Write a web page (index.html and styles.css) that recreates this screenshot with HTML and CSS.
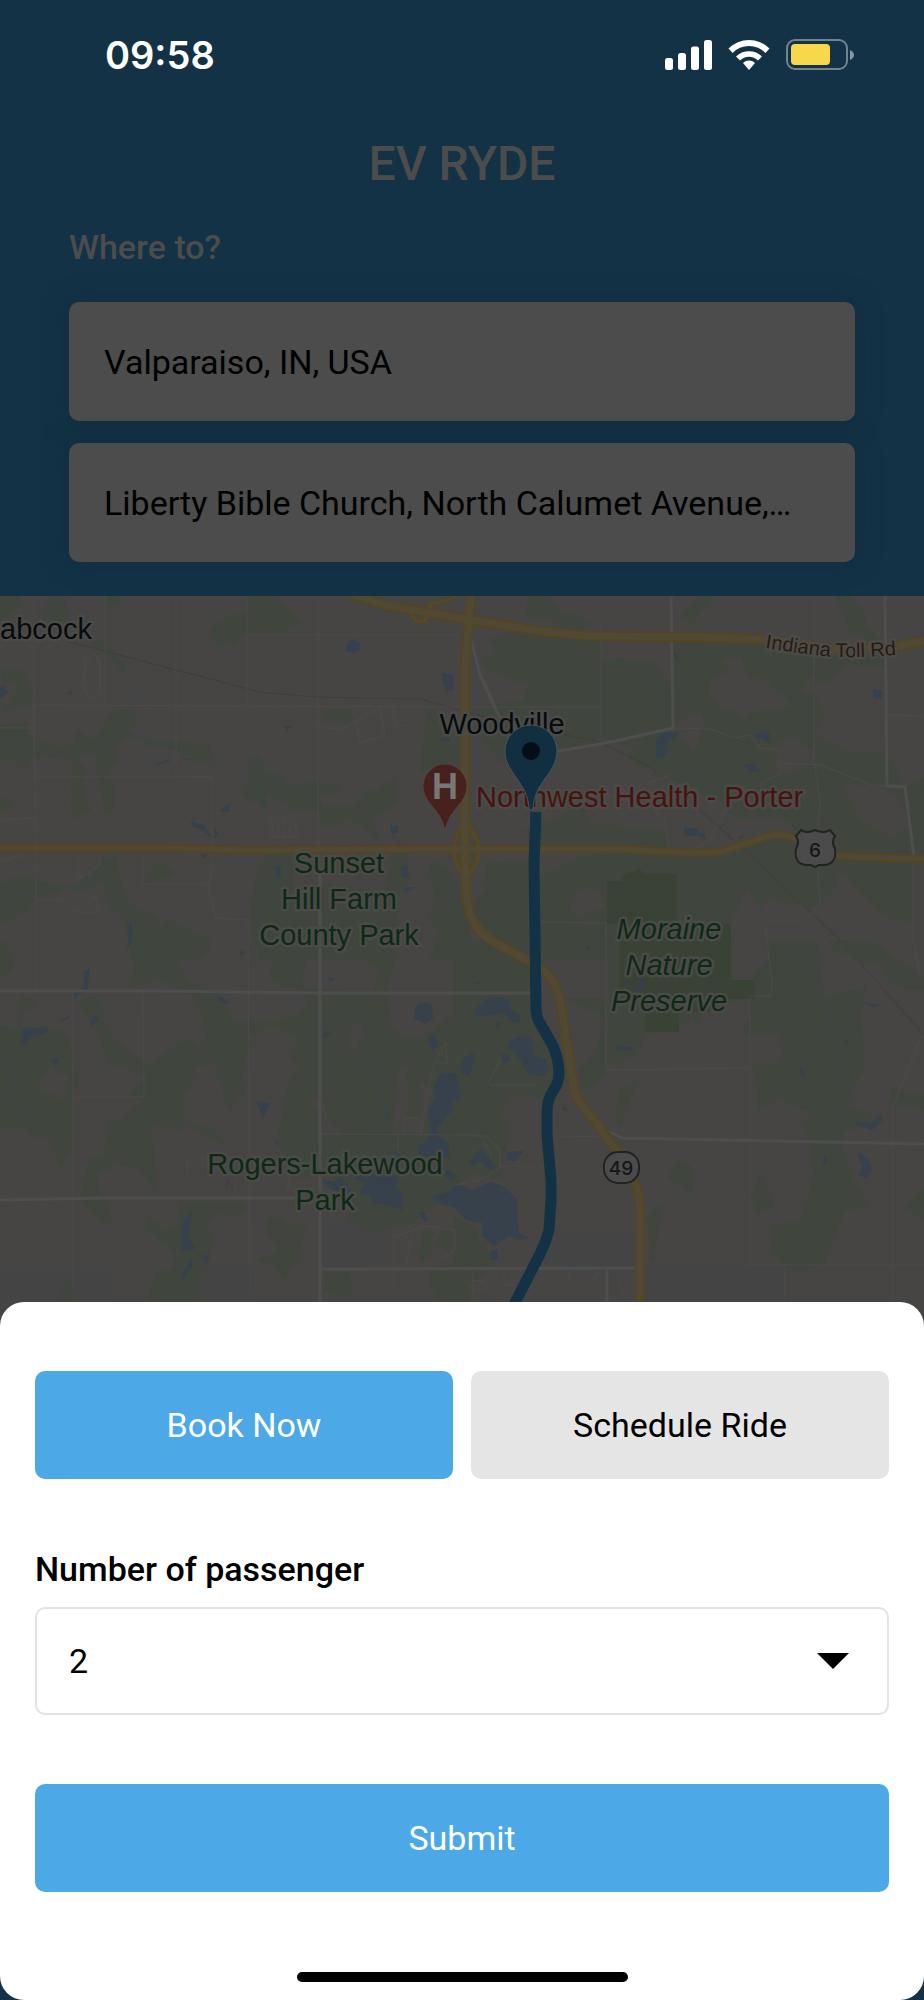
FILE: index.html
```html
<!DOCTYPE html>
<html lang="en">
<head>
<meta charset="utf-8">
<meta name="viewport" content="width=device-width, initial-scale=1">
<title>EV RYDE</title>
<link rel="stylesheet" href="styles.css">
</head>
<body>
<div class="screen">
  <header class="top">
    <div class="status">
      <time class="clock">09:58</time>
      <svg class="status-icons" viewBox="0 0 192 36" aria-hidden="true">
        <g fill="#fff">
          <rect x="2" y="21" width="8" height="12" rx="2.5"/><rect x="15" y="16" width="8" height="17" rx="2.5"/><rect x="28" y="9.500" width="8" height="23.500" rx="2.500"/><rect x="41" y="3" width="8" height="30" rx="2.500"/>
          <path d="M65.500 11.500 A29 29 0 0 1 106.500 11.500 L102.500 16 A23 23 0 0 0 69.500 16Z"/>
          <path d="M73 19.500 A18.500 18.500 0 0 1 99 19.500 L95 23.500 A12.500 12.500 0 0 0 77 23.500Z"/>
          <path d="M80 26 A8.500 8.500 0 0 1 92 26 L86 33Z"/>
        </g>
        <rect x="124" y="3" width="60" height="29" rx="8" fill="none" stroke="#718490" stroke-width="2"/>
        <rect x="128" y="7" width="39" height="21" rx="4" fill="#f8d84a"/>
        <path d="M187 13 Q191 15 191 18 Q191 21 187 23Z" fill="#8a98a1"/>
      </svg>
    </div>
    <h1 class="title">EV RYDE</h1>
    <form class="route">
      <h2 class="route-label">Where to?</h2>
      <input class="place" type="text" aria-label="Pick-up" value="Valparaiso, IN, USA">
      <input class="place" type="text" aria-label="Destination" value="Liberty Bible Church, North Calumet Avenue,…">
    </form>
  </header>

  <svg class="map" viewBox="0 596 924 740" preserveAspectRatio="xMidYMin slice" role="img" aria-label="Route map">
    <rect y="596" width="924" height="740" class="land"/>
    <path fill="#444444" d="M324 1222H390V1268H324ZM0 1270H110V1336H0ZM200 1265H250V1336H200ZM545 1232H635V1268H545ZM640 1266H790V1336H640Z"/>

    <g class="green" transform="translate(0 590) scale(.33333)">
      <path d="M0 18H65L50 60 0 95ZM150 18H195L205 85 165 115 125 85ZM315 18H362V45L330 55 315 40ZM742 18H820L860 45 903 103 850 128 742 125 700 165 655 170 630 122 665 80 742 70Z"/>
      <path d="M262 152 315 148 380 235 372 252 330 200ZM5 238 62 230 98 300 90 345 12 366 30 330 50 300 40 280 5 275ZM0 405 80 398 82 430 130 450 175 470 225 460 222 435 242 422 262 450 300 430 330 375 370 358 410 370V405L385 425 460 450 630 465 634 515 600 520 530 480 440 465 380 435 345 470 350 520 318 545 345 600 345 655 330 678 310 665 308 600 288 560 292 490 230 510 252 530V620L275 660 215 690V510L130 500 85 510 65 543 40 510 0 512Z"/>
      <path d="M0 618 25 620 35 650 0 668ZM750 492 782 505 795 535 855 565 862 585 945 575 1020 588 1010 615 965 618 967 650 1020 640 1065 650 1095 600 1130 605 1185 562 1188 635 1165 660 1110 685 1138 745 1132 760 1090 705 1040 690 1000 712 962 705V670L885 665 845 640 800 605V660L770 640 725 615 745 575ZM975 360 1050 355 1060 390 1040 400 975 395ZM1280 362 1325 370V440L1382 420V530L1360 545 1300 530 1262 545Z"/>
      <path d="M445 845 480 815 520 845V855L442 880ZM0 880 80 850 110 875 185 880V910L110 920 80 970 0 1000ZM350 795 365 900 380 930 410 950 470 975 480 1015 520 988 630 1050V1080L600 1110H395L375 990 330 950 300 880 240 905 200 895 290 840 315 805ZM805 790 860 790 880 810 880 890 925 885 980 880 1090 900 1160 905 1170 800 1190 740 1220 790 1230 870 1190 930 1195 1040 1150 1110H780L760 1050 750 960 770 850ZM1300 800 1350 840 1380 900 1410 1000V1110H1290L1320 1030 1280 980 1310 930 1285 850Z"/>
    </g>
    <g class="green" transform="translate(454 590) scale(.33333)">
      <path d="M220 18H280L320 60 380 80 415 105 405 120 330 115 290 90 218 85ZM735 18H775L760 50 710 105 672 85ZM1140 18H1190L1230 70 1240 110 1290 150 1270 165 1190 130 1170 70Z"/>
      <path d="M95 145 160 125 330 130 440 150V220L480 205 600 210 640 270 655 300V150H700L940 165 1140 200 1290 180V235L1180 220 1130 270 1085 290 1080 240 1020 345 960 300 945 270 880 260 860 200 800 210 830 245 770 270 765 315 810 355 845 350 870 390 930 350H1000L1040 310H1080L1110 370 1080 430 1190 490H1300L1355 590 1375 790 1375 1000 1290 980 1190 880 1150 850V1110H930L960 1000 880 890 830 1000V1110H260V860L370 800 540 790 440 780 270 775 200 720 290 690 390 640 400 700 640 720 640 780 800 780 950 740 1020 750V700L900 680 860 700 800 640 720 600 640 560 520 510 540 480 450 440 350 475 310 480 200 510 140 520 60 400 80 350 210 330 220 290 100 240 90 210 130 190Z"/>
      <path d="M1355 590 1410 560V790L1375 790ZM0 1000 90 900 100 820 222 810V1090L90 1030 40 950Z"/>
    </g>
    <g class="land" transform="translate(454 590) scale(.33333)">
      <path d="M400 890 440 910 450 950 370 980 345 960 360 915ZM680 390 740 370 750 410 720 490 670 420ZM880 1020 940 930 1090 950 1180 860 1290 980 1375 1000V1110H930ZM960 470 1000 440 1060 470 1090 490 1080 520 970 560ZM1160 580 1280 590 1330 620 1375 710 1310 740 1220 690Z"/>
    </g>
    <g class="green" transform="translate(0 940) scale(.33333)">
      <path d="M0 0 15 5 45 75 12 112 0 105ZM415 0H630V25L580 25 530 40 530 70 570 125 650 155 705 245 800 240 880 230 925 200 905 155 885 140 860 145 815 120 810 80 840 35 920 35 905 140 980 150 1085 155 1160 165 1175 200 1160 240 1200 290 1270 285 1360 225 1410 180V700L1330 780 1220 860 1100 875 1040 830 1060 770 980 700 960 700 895 720 830 600 850 510 865 420 905 385 875 350 890 300 820 260 750 290 740 350 725 400 740 475 710 460 695 510 670 490 670 430 640 400 660 365 590 385 580 430 550 460 555 545 600 550 640 565 680 620 620 590 560 545 540 570 450 555 460 620 470 760 435 710 400 680 350 675 295 700 290 740 325 795 340 860 270 815 240 770 270 660 310 640 330 545 365 540 430 480 380 470 440 410 325 370 290 260 240 205 240 185 280 165 310 190 310 240 345 300 450 380 545 300 580 300 590 320 620 295 610 240 580 170 480 120 395 140Z"/>
      <path d="M65 165 105 190 105 200 75 210 65 230 75 260 180 260 210 300 215 360 245 410 220 460 215 640 180 685 165 630 135 590 100 595 70 565 0 565V260H55V220H60ZM540 785H730L740 805 720 830 655 820 620 860 640 895 620 985 600 1000 600 1100H440L465 1000 520 980 525 935 480 910 440 865 445 830 500 865 535 850ZM800 835 845 830 870 850 920 860 905 900 900 950 850 1025 830 985 770 960 810 950 835 920 800 880ZM980 1000 1050 995 1058 1065 990 1065 972 1045ZM190 1020 220 1015V1085H180ZM1290 980 1390 965 1410 1085H1320L1290 1040ZM1090 0H1200L1160 150H1120L1140 95 1095 65ZM1320 0H1410V70L1290 55ZM1270 870 1300 875 1290 960 1260 960ZM1330 860 1365 890 1345 940 1305 915Z"/>
    </g>
    <g class="land" transform="translate(0 940) scale(.33333)">
      <path d="M110 440 150 385 205 410V470L175 475ZM970 520 925 485 965 460 985 540 1035 585H970ZM1195 385 1220 380 1225 500 1200 585H1175ZM1045 275 1080 240 1090 280 1065 335 1045 325ZM1260 430 1300 440 1270 580H1215V530L1260 525Z"/>
    </g>
    <g class="green" transform="translate(454 940) scale(.33333)">
      <path d="M0 0H100L228 70V160H0ZM285 0H460V10L410 40 285 30ZM330 175H445L460 210V400L420 440 375 445 375 385 430 340 445 230ZM0 160H228L245 240 300 320 310 440 250 475 240 465H165L135 530 160 555V600L140 700 150 720 60 700 0 700ZM465 0H840V120H905V175H860L820 200 740 220 730 265 715 230 660 275 570 280 560 340 500 375 465 370ZM550 425 500 555 485 550 495 450 520 430ZM890 175 900 100 950 60 930 0H1090L1110 170 1200 150 1240 130 1220 230 1230 320 1230 400 1200 430 1195 500 1250 520 1280 525 1170 580 1160 620 1200 720 1250 795 1170 820 1110 970 1040 995 990 980 950 940 955 860 1040 840 1080 700 1070 600 1050 555 1075 510 1030 510 980 475 915 515 910 440 895 370 980 370 990 320 970 285 875 290 870 250 890 240ZM1120 0H1250L1410 110V150L1340 150 1300 120 1290 80 1200 60 1140 30ZM1310 445 1410 460V510L1310 495ZM920 705 965 800 910 820 890 770ZM680 660 710 675 718 765 640 710ZM620 790 600 965 590 960 580 820ZM1410 740V840L1355 805ZM0 830 60 860 80 910 120 950V980L0 1070Z"/>
    </g>
    <path class="reserve" d="M607 881H622L624 874 640 869 643 874H677V924H731V980H755V999H727V1011L679 1013V1032H645V999H619V924H607Z"/>

    <g class="water" transform="translate(0 590) scale(.33333)">
      <path d="M1038 165 1058 147 1082 158 1080 178 1060 190 1038 182ZM1328 248 1360 255 1358 303 1338 303 1328 275ZM0 290 15 288 25 310 0 325ZM466 523 510 508 508 514 466 528ZM660 660 693 637 685 665 665 665ZM572 695 612 705 640 748 605 718 575 708ZM645 715 655 735 642 748ZM828 828H843V862H828ZM600 790 625 795 610 805ZM1205 830 1223 823 1225 865 1204 860ZM1213 890 1248 892 1225 905H1213ZM385 1000 396 998 395 1055 380 1080 388 1045ZM1168 700 1182 710 1195 705 1192 728 1175 732ZM855 408H875L860 422ZM1318 443H1350V453H1318ZM200 312 217 300 213 313ZM552 503 578 508 560 513ZM715 1082 735 1085 722 1097Z"/>
    </g>
    <g class="water" transform="translate(454 590) scale(.33333)">
      <path d="M605 450 625 430 675 425 668 440 640 460 640 485 625 508 607 500ZM900 435 945 425 948 458 925 448ZM870 525 900 520 918 545 885 545ZM690 712 730 715 735 728 752 730 755 750 735 738 690 735ZM1258 300H1285V325H1258ZM660 190 675 200 665 208ZM850 740 875 735 860 748ZM1010 700 1028 712 1020 722ZM398 1060 410 1082 398 1080Z"/>
    </g>
    <g class="water" transform="translate(0 940) scale(.33333)">
      <path d="M252 95 270 85 262 145 235 165 220 178V160L250 145ZM65 268 145 262 140 278 90 292 75 310 63 310ZM172 248 207 225 205 238ZM285 225 298 238 282 250 278 268 270 245ZM152 357H178L166 378ZM655 167 692 188 680 192 655 180ZM768 483 812 492 788 535ZM820 598 838 605 832 620ZM545 855 570 815 575 835 565 890 582 915 580 932H545ZM572 948 580 975 550 1020 545 1000 562 980ZM615 940 628 955 620 972 610 960ZM985 110 1008 118 987 128ZM970 280 998 275 972 295ZM1243 205 1265 185 1295 193 1300 235 1275 252 1245 238ZM1300 282 1320 318 1295 327 1283 300ZM1327 398 1370 400 1375 440 1382 465 1355 490 1362 505 1335 535 1310 565 1315 585 1347 610 1348 655 1300 655 1258 645 1255 620 1290 590 1287 510 1305 470 1302 435ZM1155 510 1170 525 1160 540ZM970 720 1005 725 1020 710 1055 750 1050 765 980 745ZM1050 705 1195 705 1185 740 1208 760 1208 812 1165 795 1115 790 1110 765 1078 760 1095 730ZM1290 770 1345 755 1370 732 1410 745V845L1380 805 1325 795ZM1340 685 1370 710 1355 722 1335 710ZM1255 818 1270 815 1285 840 1275 845ZM1410 342 1382 380 1395 400 1410 408ZM680 720 688 725 677 745ZM1170 632 1200 640 1195 655Z"/>
    </g>
    <g class="water" transform="translate(454 940) scale(.33333)">
      <path d="M63 210 100 175 140 170 170 185 165 205 202 230 195 250 175 245 150 220 65 230ZM160 320 170 300 205 285 235 300 238 345 278 360 282 385 270 410 220 402 200 360ZM20 375 35 350 62 338 60 365 45 407 22 400ZM0 405 12 430 20 468 0 482ZM140 345 160 342 172 360 150 370ZM0 735 55 750 110 725 150 738 190 780V850L195 880 225 895 195 900 165 888 120 920 82 885 88 850 35 840 0 800ZM45 670 82 620 100 650 125 680 110 692 80 665 60 675ZM160 635 212 632 180 665 158 655ZM112 930 130 928 133 960 112 960ZM487 317 530 320 542 337 490 328ZM1035 365 1045 390 1060 415 1040 405ZM1205 545 1250 550 1283 520 1285 540 1255 570 1210 555ZM1213 637 1240 655 1255 690 1235 715 1215 705 1225 680 1215 660ZM1113 640 1122 665 1105 683ZM1225 185 1285 195 1255 203ZM325 490 342 512 328 510ZM510 125 530 120 510 140ZM535 155 565 120 578 115 565 145 550 160ZM60 125 88 128 70 132ZM120 250 140 245 135 265ZM1170 300 1180 302 1175 315ZM755 942 770 955 757 948Z"/>
    </g>

    <g class="stream">
      <path d="M50 596 49 628 100 632 110 650 125 670 135 703 122 731 92 755 70 760 35 747 0 741M123 731 150 738 180 748 205 765 248 757 262 773 283 780 285 786 313 783 325 775 361 750 385 750 392 754 410 751 418 768M153 740 150 755 145 770M135 703 156 680 147 665 150 645 162 632 209 605 216 610 218 645 225 662 250 670 278 670M248 757 250 780 262 795 262 825 270 845 290 850 292 865 262 900 257 930M0 897 30 893 55 884 85 886 102 872 120 895 137 910 137 930 140 957 180 986 215 996"/>
      <path d="M290 950 302 970 296 985 298 1005 315 1012 323 1030M323 1030 345 1020 360 1020 365 1040 362 1055 378 1080 385 1110 388 1115 380 1140 395 1155M0 1061 15 1070 12 1095 25 1120M0 1027 18 1028"/>
      <path d="M602 640 610 662 650 668 666 698 666 720M545 596 570 620 590 624M658 757 690 780 715 790 740 788M700 829 712 823 735 830 755 833 760 815M765 850 765 865 755 890 765 925 790 950 815 970 830 1020 840 1075 858 1085 850 1105 825 1130 845 1165 820 1175 818 1190M790 945 860 990 862 1003M548 1248 568 1265 595 1263 615 1270 618 1300M730 970 765 967"/>
    </g>

    <path class="rail" d="M70 642 260 692 315 697 420 699 500 721 600 742 650 767 700 810 750 855 840 940 924 1035"/>
    <g class="lane">
      <path d="M34 596V705L36 850 36 990M105 596V705M176 596V776L212 777V870L208 887 216 918 248 920 250 1290M247 596V706M247 635H460M318 596V850M34 705 460 707H600M0 728H34M35 777H212M143 850V884H208M0 820 34 818M318 726 340 730 362 718 380 708 385 735 360 743 355 720M393 708 395 725 407 725M78 850V879L100 866 99 856M0 862 20 855 35 872M36 900H62L75 912 95 895 99 913H80M270 825V818H293L298 835V837H272V820M278 818V836M284 818V836M290 818V836M84 655V690M100 655V697M85 685V670Q92 640 100 665V690Q92 707 85 690"/>
      <path d="M73 990V1290M143 990 144 1097 73 1097M321 1134 480 1135 492 1155M398 1134V1150M421 1134 423 1118 432 1070 446 1042 447 1063H437M404 1135V1118H422M187 1178V1160H210M235 1180V1200M290 1175 287 1195M394 1290V1237L425 1226 455 1230 455 1250 437 1260M412 1234 405 1268"/>
      <path d="M601 622V736M601 800 670 775M675 728 710 729 735 738 750 735 760 748 780 750V773L730 800 710 840 695 849M780 763 820 765 872 785 887 786M814 596V760L820 800 817 850 820 905 800 922H765V927L772 980 771 996H750V1140M887 715 924 716M606 922V1070L750 1068M540 922 606 923V940M668 815 660 800 654 810 665 820 668 850M554 1136 610 1137M924 1035 920 1040 893 1106V1336M750 1140V1265H924M785 1268V1300M913 860V940L920 977M469 1136 486 1136 500 1150V1168L480 1180 454 1185M500 1166H545M487 1085 500 1060M490 1085H535M473 1270V1300M473 1280 486 1282V1290H473M504 1270V1285H514M568 1270 570 1280H594L600 1270"/>
    </g>
    <g class="street">
      <path d="M671 596 673 728 620 740 595 745 558 751M471 640 475 655 480 675 500 718M885 596 887 786 905 787 914 857M0 991 160 991 320 993 530 993M320 870V1336M0 1200 105 1198 296 1198M322 1269 636 1268M607 1270V1336M602 1134 610 1132 622 1138 924 1144"/>
    </g>

    <g class="hw-edge" fill="none">
      <path d="M350 594 385 605 470 620 540 631 590 636 700 637 770 640 830 648 890 648 924 641"/>
      <path d="M471 596 469 622 465 665 465 850 466 890Q467 925 490 940L534 964Q556 977 560 1000L575 1095 590 1115 620 1155Q639 1180 640 1210V1336"/>
      <path class="hw-narrow" d="M0 848H150L250 850 420 849 620 849 690 853 720 852 765 837Q785 830 805 844L830 856 924 859"/>
      <path class="ramp" d="M410 613C417 627 430 624 430 604M430 605 460 596M465 820Q455 833 454 850Q455 865 466 878M465 820Q478 835 479 850Q478 865 466 878"/>
    </g>
    <g class="hw-fill" fill="none">
      <path d="M350 594 385 605 470 620 540 631 590 636 700 637 770 640 830 648 890 648 924 641"/>
      <path d="M471 596 469 622 465 665 465 850 466 890Q467 925 490 940L534 964Q556 977 560 1000L575 1095 590 1115 620 1155Q639 1180 640 1210V1336"/>
      <path class="hw-narrow" d="M0 848H150L250 850 420 849 620 849 690 853 720 852 765 837Q785 830 805 844L830 856 924 859"/>
      <path class="ramp" d="M410 613C417 627 430 624 430 604M430 605 460 596M465 820Q455 833 454 850Q455 865 466 878M465 820Q478 835 479 850Q478 865 466 878"/>
    </g>

    <g class="label">
      <text class="town" x="0" y="639">abcock</text>
      <text class="town" x="502" y="734" text-anchor="middle">Woodville</text>
      <text class="hospital" x="476" y="807">Northwest Health - Porter</text>
      <g class="park" text-anchor="middle">
        <text x="339" y="873">Sunset</text><text x="339" y="909">Hill Farm</text><text x="339" y="945">County Park</text>
        <text x="325" y="1174">Rogers-Lakewood</text><text x="325" y="1210">Park</text>
        <g font-style="italic"><text x="669" y="939">Moraine</text><text x="669" y="975">Nature</text><text x="669" y="1011">Preserve</text></g>
      </g>
      <path id="toll-name" fill="none" stroke="none" d="M765 648Q802 654 835 657Q870 658 915 653"/>
      <text class="road-name"><textPath href="#toll-name">Indiana Toll Rd</textPath></text>
    </g>

    <path d="M445 827Q443 817 433 806Q424 796 424 786A21 21 0 0 1 466 786Q466 796 457 806Q447 817 445 827Z" fill="#47211e" stroke="#551a17"/>
    <text class="h-mark" x="445" y="799" text-anchor="middle">H</text>

    <path d="M801 830Q807 834 815 830Q824 834 830 830L835 836Q831 842 835 849Q837 864 824 865H819L815 867 811 865H806Q794 864 796 849Q800 842 796 836Z" class="shield"/>
    <text class="shield-text" x="815" y="857" text-anchor="middle">6</text>
    <rect x="604" y="1152" width="35" height="31" rx="14" class="shield"/>
    <text class="shield-text" x="621" y="1175" text-anchor="middle">49</text>

    <path d="M536 812 534 865 536 1008Q536 1018 541 1025L553 1046Q559 1060 559 1073Q559 1083 553 1091Q547 1100 547 1112V1135L551 1180V1200L549 1230Q546 1242 540 1254L502 1328" fill="none" stroke="#133246" stroke-width="11"/>
    <path d="M529 809C528 782 505 773 505 751A26 26 0 0 1 557 751C557 773 534 782 533 809Q531 811 529 809Z" fill="#112f40" stroke="#47545b"/>
    <circle cx="531" cy="751" r="9" fill="#020f16"/>
  </svg>

  <main class="sheet">
    <div class="modes">
      <button class="btn btn-primary" type="button">Book Now</button>
      <button class="btn btn-muted" type="button">Schedule Ride</button>
    </div>
    <div class="field">
      <label class="field-label" for="passengers">Number of passenger</label>
      <div class="select-box">
        <select class="select" id="passengers"><option>1</option><option selected>2</option><option>3</option><option>4</option></select>
        <svg class="caret" viewBox="0 0 32 16" aria-hidden="true"><path d="M0 0H32L16 16Z"/></svg>
      </div>
    </div>
    <button class="btn btn-primary" type="submit">Submit</button>
    <div class="home-bar"></div>
  </main>
</div>
</body>
</html>
```
FILE: styles.css
```css
* { box-sizing: border-box; }

body {
  margin: 0;
  background: #133246;
  font-family: Roboto, "Liberation Sans", sans-serif;
  color: #000;
}

.screen {
  min-height: 100vh;
  display: flex;
  flex-direction: column;
}

/* Header */
.top { padding: 32px 69px 34px; }

.status {
  display: flex;
  align-items: center;
  justify-content: space-between;
  height: 46px;
  padding-left: 36px;
}

.clock {
  font: 600 38px/46px Inter, sans-serif;
  color: #fff;
}

.status-icons { width: 192px; height: 36px; }

.title {
  margin: 58px 0 0;
  font-size: 48px;
  font-weight: 500;
  line-height: 56px;
  text-align: center;
  color: #4c4c4c;
}

.route {
  display: flex;
  flex-direction: column;
  margin-top: 35px;
}

.route-label {
  margin: 0 0 35px;
  font-size: 34px;
  font-weight: 500;
  line-height: 40px;
  color: #4c4c4c;
}

.place {
  width: 100%;
  height: 119px;
  padding: 0 35px;
  border: 0;
  border-radius: 10px;
  background: #4c4c4c;
  box-shadow: 0 0 24px rgba(20, 45, 60, .8);
  font: 400 34px/40px Roboto, sans-serif;
  color: #000;
  text-overflow: ellipsis;
}

.place + .place { margin-top: 22px; }

/* Map */
.map {
  display: block;
  width: 100%;
  height: 740px;
  margin-bottom: -34px;
}

.land { fill: #464543; }
.green { fill: #40463e; }
.reserve { fill: #3a4236; }
.water { fill: #37414b; }
.stream { fill: none; stroke: #3d464d; stroke-width: 1; }
.rail { fill: none; stroke: #3f3e3c; stroke-width: 1; }
.lane { fill: none; stroke: #4b4b4a; stroke-width: 1; }
.street { fill: none; stroke: #4e4e4e; stroke-width: 3; }
.hw-edge { stroke: #55451f; stroke-width: 10; }
.hw-fill { stroke: #514933; stroke-width: 7; }
.hw-edge .hw-narrow { stroke-width: 8; }
.hw-fill .hw-narrow { stroke-width: 5; }
.hw-edge .ramp { stroke-width: 5; }
.hw-fill .ramp { stroke-width: 2; }

.label {
  font: 400 29px "Liberation Sans", sans-serif;
  stroke: #4a4a49;
  stroke-width: 5;
  stroke-linejoin: round;
  paint-order: stroke;
}

.town { fill: #080a0c; }
.park { fill: #0f2915; }
.hospital { fill: #48130f; }
.road-name { font-size: 20px; fill: #2a1a0b; }
.h-mark { font: 700 36px "Liberation Sans", sans-serif; fill: #777; }
.shield { fill: #4b4b4b; stroke: #222; stroke-width: 2; }
.shield-text { font: 500 19px Inter, sans-serif; fill: #161616; }

/* Booking sheet */
.sheet {
  position: relative;
  flex: 1;
  display: flex;
  flex-direction: column;
  padding: 69px 35px 18px;
  border-radius: 24px;
  background: #fff;
}

.modes {
  display: grid;
  grid-template-columns: 1fr 1fr;
  gap: 18px;
}

.btn {
  width: 100%;
  height: 108px;
  border: 0;
  border-radius: 10px;
  font: 400 34px/40px Roboto, sans-serif;
}

.btn-primary { background: #4ca8e6; color: #fff; }
.btn-muted { background: #e5e5e5; color: #000; }

.field { margin: 70px 0 69px; }

.field-label {
  display: block;
  margin-bottom: 18px;
  font-size: 34px;
  font-weight: 500;
  line-height: 40px;
}

.select-box { display: grid; align-items: center; }
.select-box > * { grid-area: 1 / 1; }

.select {
  appearance: none;
  width: 100%;
  height: 108px;
  padding: 0 32px;
  border: 2px solid #e3e3e3;
  border-radius: 10px;
  background: #fff;
  font: 400 34px/40px Roboto, sans-serif;
  color: #000;
}

.caret {
  width: 32px;
  height: 16px;
  margin-right: 40px;
  justify-self: end;
  pointer-events: none;
}

.home-bar {
  width: 331px;
  height: 10px;
  margin: auto auto 0;
  border-radius: 5px;
  background: #000;
}
```
